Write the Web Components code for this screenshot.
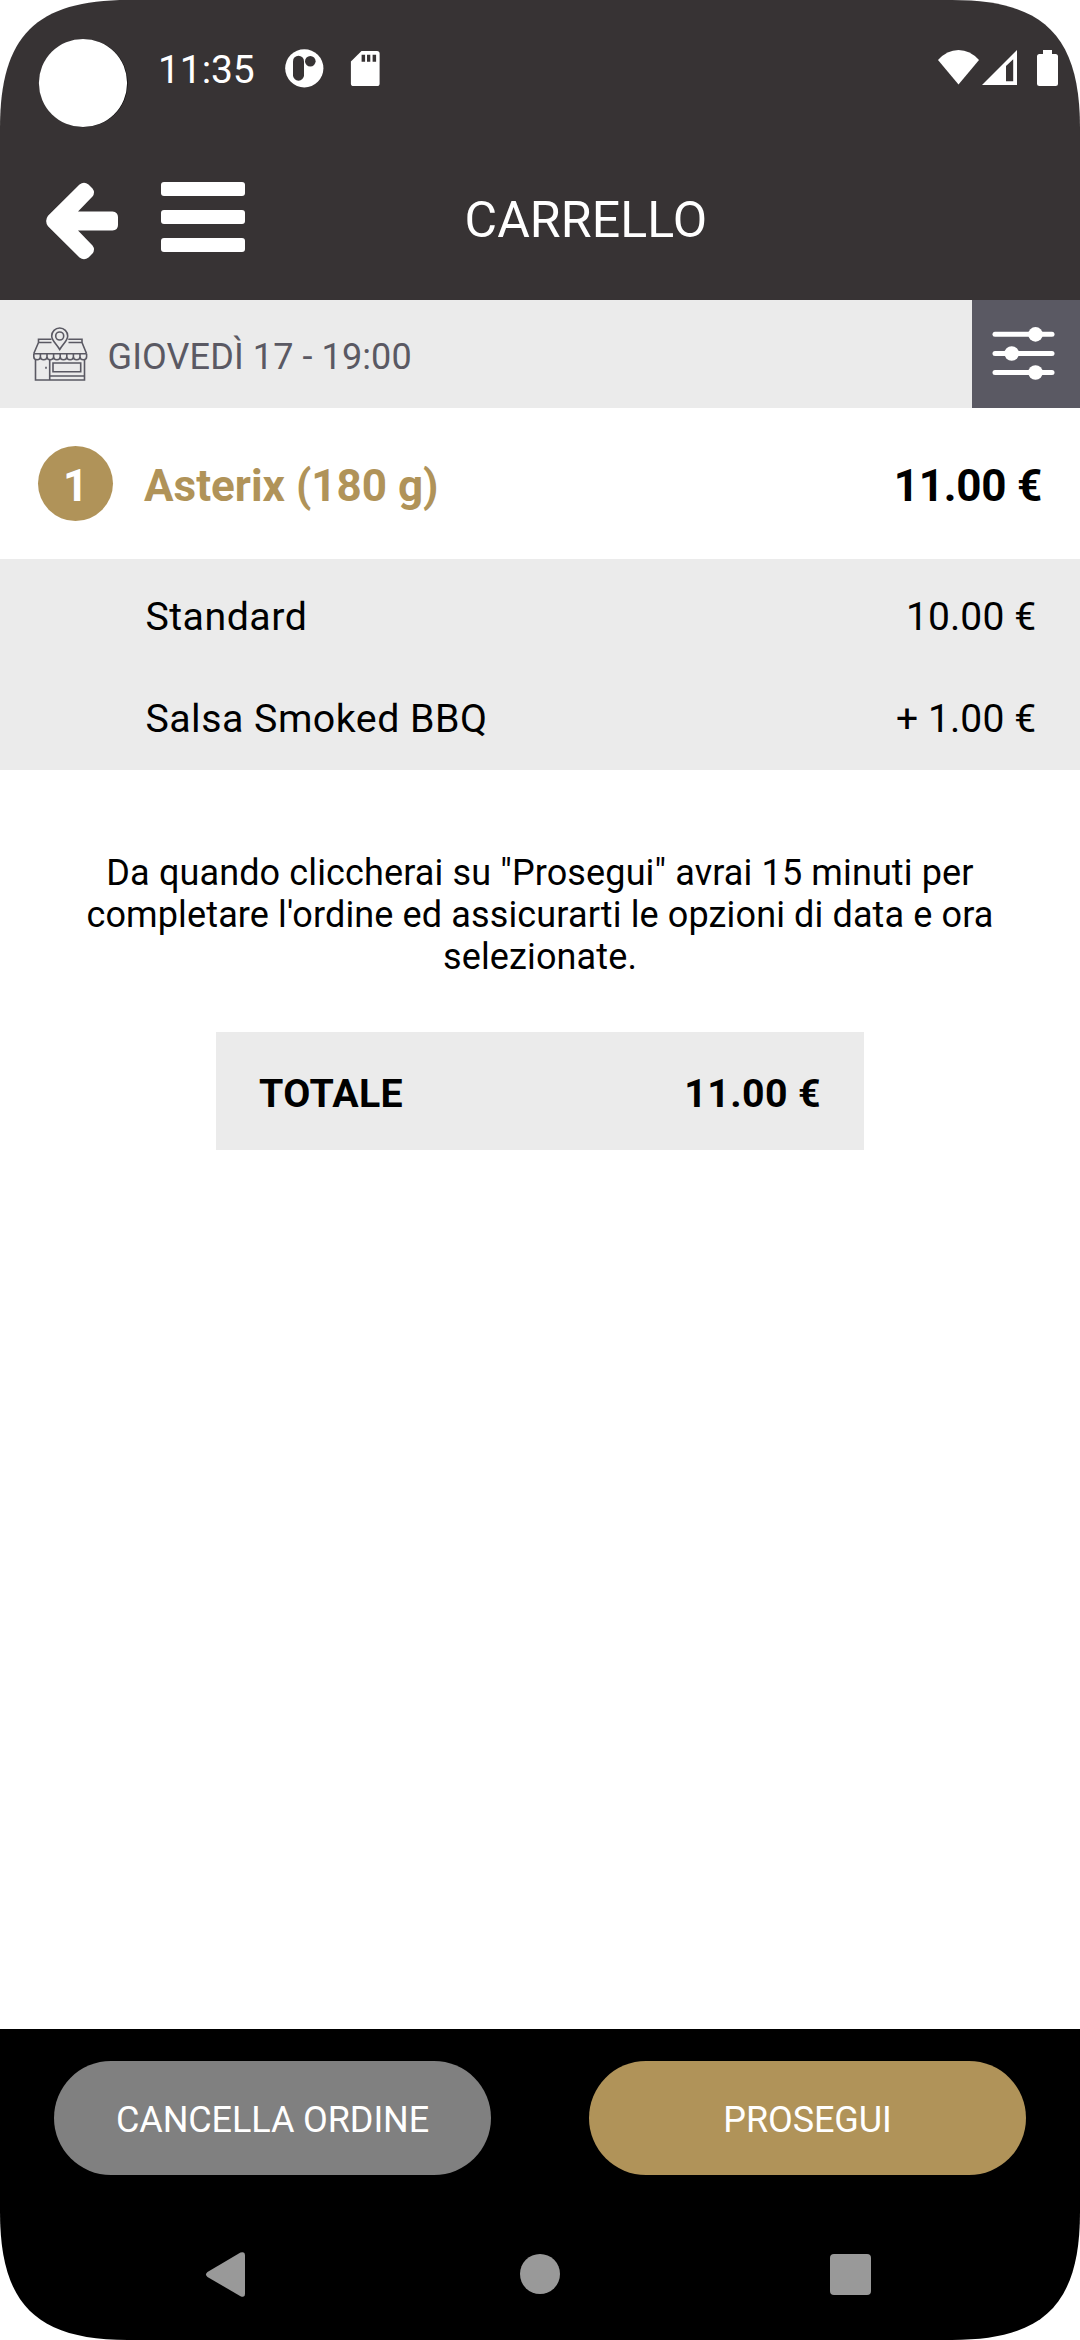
<!DOCTYPE html>
<html lang="it">
<head>
<meta charset="utf-8">
<title>Carrello</title>
<style>
html,body{margin:0;padding:0;background:#fff}
body{font-family:Roboto,"Liberation Sans",sans-serif;width:1080px;height:2340px;overflow:hidden}
</style>
</head>
<body>
<cart-screen></cart-screen>
<script>
const define = (name, css, html) => {
  customElements.define(name, class extends HTMLElement {
    constructor() {
      super();
      this.attachShadow({ mode: "open" }).innerHTML = `<style>*{box-sizing:border-box}:host{box-sizing:border-box}svg{display:block;flex:none}${css}</style>${html}`;
    }
  });
};

define("status-bar",
  `:host{display:flex;justify-content:space-between;height:140px;line-height:140px;color:#fff;font-size:39px;white-space:nowrap}
   .side{display:flex}
   .time{margin-left:26px;width:112px;letter-spacing:-.1px}`,
  `<div class="side">
    <svg width="132" height="140"><circle cx="83.7" cy="83.2" r="44" fill="#000"/><circle cx="83" cy="83" r="44.1" fill="#fff"/></svg>
    <span class="time">11:35</span>
    <svg width="130" height="140" viewBox="270 0 130 140">
      <circle cx="304.3" cy="68.3" r="19.1" fill="#fff"/>
      <rect x="293" y="55.7" width="11" height="25" rx="5.5" fill="#373334"/>
      <circle cx="310.3" cy="61.3" r="5.3" fill="#373334"/>
      <path d="M361.5 51H377q2.6 0 2.6 2.6V83.4q0 2.6-2.6 2.6H353.5q-2.6 0-2.6-2.6V61.5Z" fill="#fff"/>
      <path d="M361.6 54.7h3.5v7h-3.500zM367 54.7h3.300v7H367zM372.6 54.700h3.500v7h-3.500z" fill="#373334"/>
    </svg>
  </div>
  <svg width="160" height="140" viewBox="920 0 160 140" fill="#fff">
    <path d="M938 60Q947 50 958.5 50T979 60L958.5 84.5Z"/>
    <path fill-rule="evenodd" d="M982 85L1017 50V85ZM1006 66V81.300H1013.200V59.300Z"/>
    <path d="M1043 50h9v4h3.500q2.500 0 2.500 2.500v27q0 2.500-2.500 2.500h-16q-2.500 0-2.500-2.500v-27q0-2.500 2.500-2.500h3.500z"/>
  </svg>`);

define("app-header",
  `:host{display:flex;height:160px;line-height:160px;color:#fff;font-size:50px;letter-spacing:.1px}
   .title{flex:1;padding-left:219.5px;white-space:nowrap}`,
  `<svg width="245" height="160" viewBox="0 140 245 160" fill="#fff">
    <path d="M78 211.4L92.500 196.500Q95.500 192.500 92.500 188.500L88.500 184.500Q84 181 79.500 184.500L48 215.800Q44.300 221 48 226.200L79.500 257.500Q84 261 88.500 257.500L92.500 253.500Q95.500 249.500 92.500 245.500L78 230.600H112.500Q118 230 118 225V217Q118 212 112.500 211.400Z"/>
    <rect x="161" y="182" width="84" height="14" rx="3"/><rect x="161" y="210" width="84" height="14" rx="3"/><rect x="161" y="238" width="84" height="14" rx="3"/>
  </svg>
  <div class="title"><slot></slot></div>`);

define("slot-bar",
  `:host{display:flex;height:108px;background:#ebebeb;color:#5a5963;font-size:36px;line-height:102px;letter-spacing:.1px;white-space:nowrap}
   .label{flex:1;padding:6px 0 0 .6px}`,
  `<svg width="107" height="108" viewBox="0 300 107 108" fill="none" stroke="#5a5963" stroke-width="1.6">
    <path d="M59.700 349.500C56 343.500 51.700 340.500 51.700 336A8 8 0 0 1 67.700 336C67.700 340.500 63.400 343.500 59.700 349.500Z"/>
    <circle cx="59.700" cy="336" r="4"/>
    <path d="M51.500 339.200H38.500V342.500M68.300 339.200H82V342.500M39 342.500H51.500M68.500 342.500H81.500M38.500 342.500L33.800 353.500M82 342.500L86.500 353.500M33.500 353.800H86.700"/>
    <path d="M33.800 353.800v3a3.300 3 0 0 0 6.600 0v-3v3a3.300 3 0 0 0 6.600 0v-3v3a3.300 3 0 0 0 6.600 0v-3v3a3.300 3 0 0 0 6.600 0v-3v3a3.300 3 0 0 0 6.600 0v-3v3a3.300 3 0 0 0 6.600 0v-3v3a3.300 3 0 0 0 6.600 0v-3v3a3.300 3 0 0 0 6.600 0v-3"/>
    <path d="M35.500 359.500V380H84.500V359.500M49.700 360V380M49.700 376H84.500M53 363H80.700V371.700H53Z"/>
    <path d="M46 366.800v2"/>
  </svg>
  <div class="label"><slot></slot></div>
  <svg width="108" height="108" viewBox="972 300 108 108" fill="#fff">
    <rect x="972" y="300" width="108" height="108" fill="#5a5963"/>
    <rect x="992.500" y="331.800" width="62" height="5" rx="2.500"/><circle cx="1035.500" cy="334.400" r="7.300"/>
    <rect x="992.500" y="350.900" width="62" height="5" rx="2.500"/><circle cx="1011.700" cy="353.500" r="7.300"/>
    <rect x="992.500" y="370" width="62" height="5" rx="2.500"/><circle cx="1035.500" cy="372.500" r="7.300"/>
  </svg>`);

define("cart-item",
  `:host{display:flex;align-items:center;height:151px;padding:0 38px;font-size:44px;font-weight:700;line-height:75px;white-space:nowrap}
   .qty{width:75px;height:75px;border-radius:50%;background:#b09359;color:#fff;text-align:center;padding-top:2.5px}
   .name{flex:1;margin-left:31px;color:#b09359;padding-top:5px}
   .price{padding-top:5px;color:#000;letter-spacing:-.25px}`,
  `<div class="qty"><slot name="qty"></slot></div><div class="name"><slot></slot></div><div class="price"><slot name="price"></slot></div>`);

define("item-options", `:host{display:block;background:#ebebeb;padding-top:7px}`, `<slot></slot>`);

define("item-option",
  `:host{display:flex;justify-content:space-between;height:102px;line-height:102px;padding:0 43.8px 0 145.4px;font-size:39px;color:#000;white-space:nowrap}
   .name{font-size:39.3px;letter-spacing:.5px}
   .price{letter-spacing:.1px}`,
  `<span class="name"><slot></slot></span><span class="price"><slot name="price"></slot></span>`);

define("cart-note",
  `:host{display:block;margin:82px 70px 54px;text-align:center;font-size:36px;line-height:42px;color:#000;letter-spacing:.13px}`,
  `<slot></slot>`);

define("cart-total",
  `:host{display:flex;justify-content:space-between;width:648px;height:118px;margin:0 auto;padding:5px 43px 0;background:#ebebeb;font-size:39.3px;font-weight:700;line-height:114px;letter-spacing:.4px;color:#000;white-space:nowrap}`,
  `<span><slot></slot></span><span><slot name="price"></slot></span>`);

define("pill-button",
  `:host{display:block;width:437px;height:114px;border-radius:57px;background:var(--pill,#808080);color:#fff;font-size:36px;line-height:110px;padding-top:4px;text-align:center;white-space:nowrap;letter-spacing:-.1px}`,
  `<slot></slot>`);

define("action-bar",
  `:host{display:flex;justify-content:space-between;padding:32px 54px 0;height:178px;background:#000}`,
  `<slot></slot>`);

define("nav-bar",
  `:host{display:block;height:133px;background:#000}`,
  `<svg width="1080" height="133" viewBox="0 2207 1080 133" fill="#999">
    <path d="M207.500 2272L240.500 2252.500Q245 2251 245 2255.500V2293.500Q245 2298 240.500 2296.200L207.500 2277Q204.500 2274.500 207.500 2272Z"/>
    <circle cx="540" cy="2274" r="20"/><rect x="830" y="2254" width="41" height="41" rx="4"/>
  </svg>`);

define("cart-screen",
  `:host{display:flex;flex-direction:column;width:1080px;height:2340px;background:#fff;
    clip-path:path("M0 128C0 36 36 0 128 0H952C1044 0 1080 36 1080 128V2212C1080 2304 1044 2340 952 2340H128C36 2340 0 2304 0 2212Z")}
   .top{background:#373334}
   main{flex:1}`,
  `<div class="top"><status-bar></status-bar><app-header>CARRELLO</app-header></div>
  <slot-bar>GIOVEDÌ 17 - 19:00</slot-bar>
  <main>
    <cart-item><span slot="qty">1</span>Asterix (180 g)<span slot="price">11.00 €</span></cart-item>
    <item-options>
      <item-option>Standard<span slot="price">10.00 €</span></item-option>
      <item-option>Salsa Smoked BBQ<span slot="price">+ 1.00 €</span></item-option>
    </item-options>
    <cart-note>Da quando cliccherai su "Prosegui" avrai 15 minuti per<br>completare l'ordine ed assicurarti le opzioni di data e ora<br>selezionate.</cart-note>
    <cart-total>TOTALE<span slot="price">11.00 €</span></cart-total>
  </main>
  <action-bar><pill-button>CANCELLA ORDINE</pill-button><pill-button style="--pill:#b09359">PROSEGUI</pill-button></action-bar>
  <nav-bar></nav-bar>`);
</script>
</body>
</html>
